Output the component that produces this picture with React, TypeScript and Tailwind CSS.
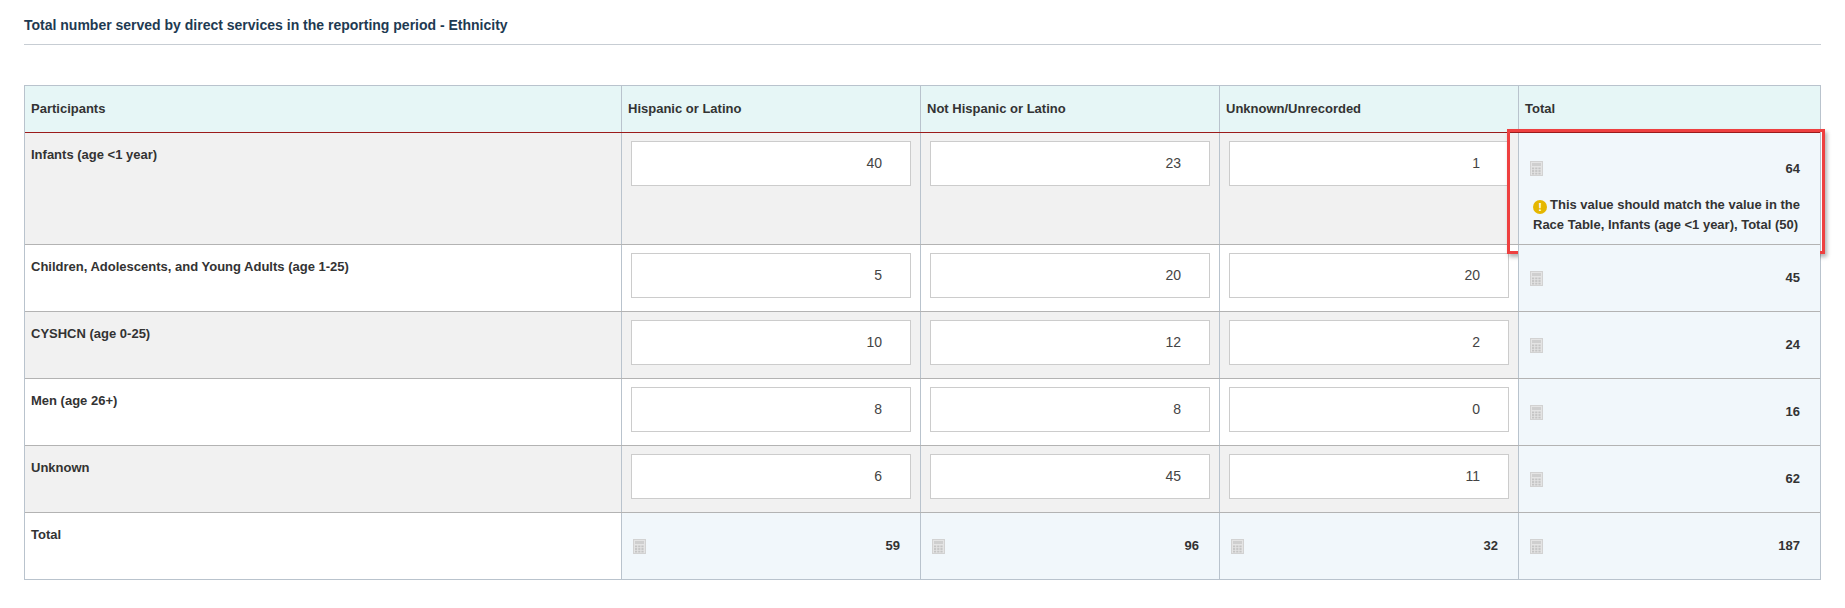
import React from "react";

const Calc = () => (
  <svg width="13" height="15" viewBox="0 0 13 15" className="shrink-0">
    <rect x="0.5" y="0.5" width="12" height="14" fill="#e4e4e4" stroke="#d2d2d2" />
    <rect x="2" y="2" width="9" height="3" fill="#cfcfcf" />
    {[0, 1, 2].map((r) =>
      [0, 1, 2].map((c) => (
        <rect key={`${r}${c}`} x={2 + c * 3.2} y={6.5 + r * 2.6} width="2.2" height="1.8" fill="#c4c4c4" />
      ))
    )}
  </svg>
);

const rows = [
  { label: "Infants (age <1 year)", v: ["40", "23", "1"], t: "64", bg: "bg-[#f1f1f1]", warn: true },
  { label: "Children, Adolescents, and Young Adults (age 1-25)", v: ["5", "20", "20"], t: "45", bg: "bg-white" },
  { label: "CYSHCN (age 0-25)", v: ["10", "12", "2"], t: "24", bg: "bg-[#f1f1f1]" },
  { label: "Men (age 26+)", v: ["8", "8", "0"], t: "16", bg: "bg-white" },
  { label: "Unknown", v: ["6", "45", "11"], t: "62", bg: "bg-[#f1f1f1]" },
];

const cellB = "border-l border-[#b9c3cd]";

export default function App() {
  return (
    <div className="w-[1845px] h-[608px] bg-white text-[#333] font-[Liberation_Sans,Arial,sans-serif]">
      <div className="mx-[24px] pt-[15px]">
        <div className="text-[14px] font-bold text-[#1e3a52] pb-[8px] border-b border-[#c7cdd3]">
          Total number served by direct services in the reporting period - Ethnicity
        </div>
        <div className="mt-[40px] border border-[#b9c3cd] text-[13px] font-bold">
          <div className="flex h-[47px] bg-[#e6f6f6] border-b border-[#9b1b1b]">
            <div className="w-[596px] px-[6px] flex items-center">Participants</div>
            {["Hispanic or Latino", "Not Hispanic or Latino", "Unknown/Unrecorded", "Total"].map((h, i) => (
              <div key={h} className={`${i === 3 ? "flex-1" : "w-[299px]"} ${cellB} px-[6px] flex items-center`}>{h}</div>
            ))}
          </div>
          {rows.map((r, ri) => (
            <div key={r.label} className={`flex ${ri === 0 ? "h-[111px]" : "h-[67px] border-t border-[#b3b3b3]"} ${r.bg}`}>
              <div className="w-[596px] px-[6px] pt-[12px]">{r.label}</div>
              {r.v.map((v, i) => (
                <div key={i} className={`w-[299px] ${cellB} pl-[9px] pr-[9px] pt-[8px]`}>
                  <div className="h-[45px] bg-white border border-[#cccccc] flex items-center justify-end pr-[28px] text-[14px] font-normal text-[#444]">{v}</div>
                </div>
              ))}
              <div className={`flex-1 ${cellB} bg-[#f1f7fb] relative`}>
                <div className={`flex items-center justify-between pl-[11px] pr-[20px] ${r.warn ? "pt-[26px]" : "h-full"}`}>
                  <Calc />
                  <span>{r.t}</span>
                </div>
                {r.warn && (
                  <>
                    <div className="px-[14px] pt-[16px] leading-[20px] text-[13px]">
                      <span className="inline-flex w-[14px] h-[14px] rounded-full bg-[#e5b700] text-white text-[11px] items-center justify-center align-[-2px] mr-[3px]">!</span>
                      This value should match the value in the Race Table, Infants (age &lt;1 year), Total (50)
                    </div>
                    <div className="absolute left-[-12px] right-[-5px] top-[-4px] bottom-[-10px] border-[3px] border-[#ee4040] shadow-[2px_3px_4px_rgba(0,0,0,0.3)] pointer-events-none" />
                  </>
                )}
              </div>
            </div>
          ))}
          <div className="flex h-[67px] border-t border-[#b3b3b3] bg-white">
            <div className="w-[596px] px-[6px] pt-[12px]">Total</div>
            {["59", "96", "32", "187"].map((t, i) => (
              <div key={i} className={`${i === 3 ? "flex-1" : "w-[299px]"} ${cellB} bg-[#f1f7fb] flex items-center justify-between pl-[11px] pr-[20px]`}>
                <Calc />
                <span>{t}</span>
              </div>
            ))}
          </div>
        </div>
      </div>
    </div>
  );
}
